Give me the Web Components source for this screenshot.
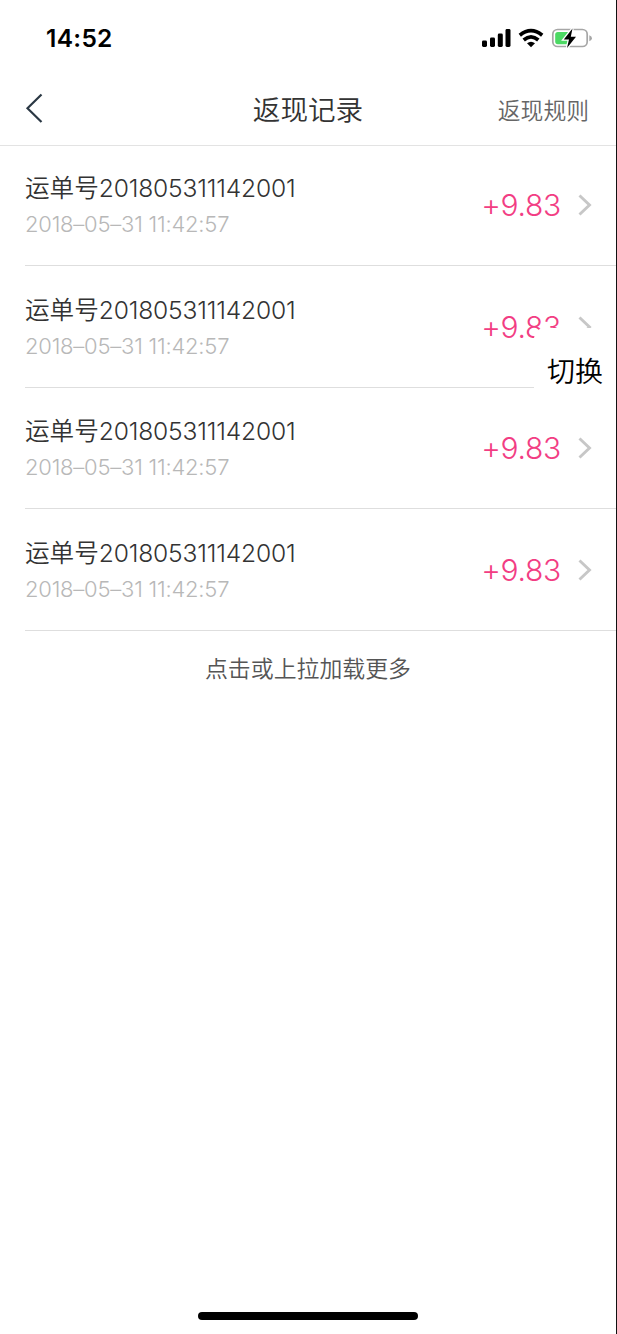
<!DOCTYPE html>
<html lang="zh-CN">
<head>
<meta charset="utf-8">
<title>返现记录</title>
<style>
html,body{margin:0;height:100%;background:#fff;overflow:hidden}
</style>
</head>
<body>
<cashback-app></cashback-app>
<script>
const define = (name, html) => customElements.define(name, class extends HTMLElement {
  constructor() {
    super();
    const t = document.createElement('template');
    t.innerHTML = html;
    this.attachShadow({mode: 'open'}).append(t.content.cloneNode(true));
  }
});

define('status-bar', `<style>
:host{display:flex;height:75px;box-sizing:border-box;padding:0 24px 0 46px;justify-content:space-between;align-items:center;color:#000}
time{font:600 24.5px/30px Inter,sans-serif;letter-spacing:.3px}
svg{display:block}
</style>
<time>14:52</time>
<svg width="112" height="24" viewBox="480 26 112 24">
<g><rect x="482" y="40.5" width="5" height="6.5" rx="1.4"/><rect x="490" y="37.5" width="5" height="9.5" rx="1.4"/><rect x="497.800" y="33.500" width="5" height="13.500" rx="1.4"/><rect x="505.500" y="29" width="5" height="18" rx="1.4"/></g>
<g fill="none" stroke="#000" stroke-width="3.7"><path d="M519.800 35.200 Q531 26.200 542.200 35.200"/><path d="M523.700 40 Q531 33.900 538.300 40"/></g>
<path d="M527 43.300Q531 40.300 535 43.300L531 47.200Z"/>
<rect x="552.800" y="29.500" width="34.400" height="17" rx="4.800" fill="#fff" stroke="#a6a6a6" stroke-width="1.700"/>
<path d="M589.300 35.200Q592 36 592 38.200T589.300 41.300Z" fill="#a6a6a6"/>
<rect x="555.200" y="31.900" width="14.500" height="12.300" rx="2.600" fill="#4cd964"/>
<path d="M572.500 28.500L563.800 39.500H569L567 48L576 36.800H570.800Z" fill="#000" stroke="#fff" stroke-width="2.600" paint-order="stroke"/>
</svg>`);

define('nav-bar', `<style>
:host{display:grid;grid-template-columns:1fr auto 1fr;align-items:center;height:71px;box-sizing:border-box;padding:0 27px 4px 27px;border-bottom:1px solid #e3e3e3;font-family:"Noto Sans CJK SC",sans-serif}
svg{display:block;margin-left:-3px}
h1{margin:0;font-weight:350;font-size:27.6px;line-height:40px;color:#333}
a{justify-self:end;font-size:22.8px;line-height:34px;color:#666;font-weight:350;padding-top:3px}
</style>
<svg width="22" height="34" viewBox="24 91 22 34"><path d="M41.500 94.500L27.500 108.300L41.500 122" fill="none" stroke="#2b3844" stroke-width="2.200"/></svg>
<h1><slot></slot></h1><a><slot name="action"></slot></a>`);

define('record-row', `<style>
:host{display:flex;box-sizing:border-box;height:121.500px;margin-left:25px;padding:26.400px 24px 0 0;border-bottom:1px solid #dedede;justify-content:space-between;font-family:Inter,"Noto Sans CJK SC",sans-serif}
.info{display:flex;flex-direction:column}
.id{font-size:24.600px;line-height:34px;color:#333;white-space:nowrap;display:flex;font-weight:350}
.num{letter-spacing:-.18px}
.date{font-size:22px;line-height:34px;margin-top:2px;color:#b8b8b8;font-weight:300;letter-spacing:-.22px}
.side{display:flex;align-items:center;height:68px;gap:16px}
.amount{font-size:30px;font-weight:330;color:#f23d83;letter-spacing:-.3px}
svg{display:block}
</style>
<div class="info"><div class="id"><span>运单号</span><span class="num"><slot></slot></span></div><div class="date"><slot name="date"></slot></div></div>
<div class="side"><span class="amount"><slot name="amount"></slot></span><svg width="15" height="24" viewBox="0 0 15 24"><path d="M2.500 2.500L12.500 12L2.500 21.500" fill="none" stroke="#c7c7c7" stroke-width="2.900"/></svg></div>`);

define('load-more', `<style>
:host{display:block;text-align:center;padding-top:19px;font:350 22.900px/34px "Noto Sans CJK SC",sans-serif;color:#555}
</style><slot></slot>`);

define('switch-button', `<style>
:host{position:absolute;left:534px;top:328px;width:82px;height:84px;border-radius:10px;background:#fff;display:flex;align-items:center;justify-content:center;font:350 28px/40px "Noto Sans CJK SC",sans-serif;color:#000}
</style><slot></slot>`);

define('home-indicator', `<style>
:host{display:block;width:220px;height:8px;border-radius:4px;background:#000;margin:auto auto 14px 198px}
</style>`);

const row = `<record-row>201805311142001<span slot="date">2018–05–31 11:42:57</span><span slot="amount">+9.83</span></record-row>`;
define('cashback-app', `<style>
:host{position:relative;display:flex;flex-direction:column;width:617px;height:1334px;box-sizing:border-box;border-right:1px solid #111;background:#fff}
main{margin-top:-1.200px}
</style>
<status-bar></status-bar>
<nav-bar>返现记录<span slot="action">返现规则</span></nav-bar>
<main>${row.repeat(4)}</main>
<load-more>点击或上拉加载更多</load-more>
<home-indicator></home-indicator>
<switch-button>切换</switch-button>`);
</script>
</body>
</html>
